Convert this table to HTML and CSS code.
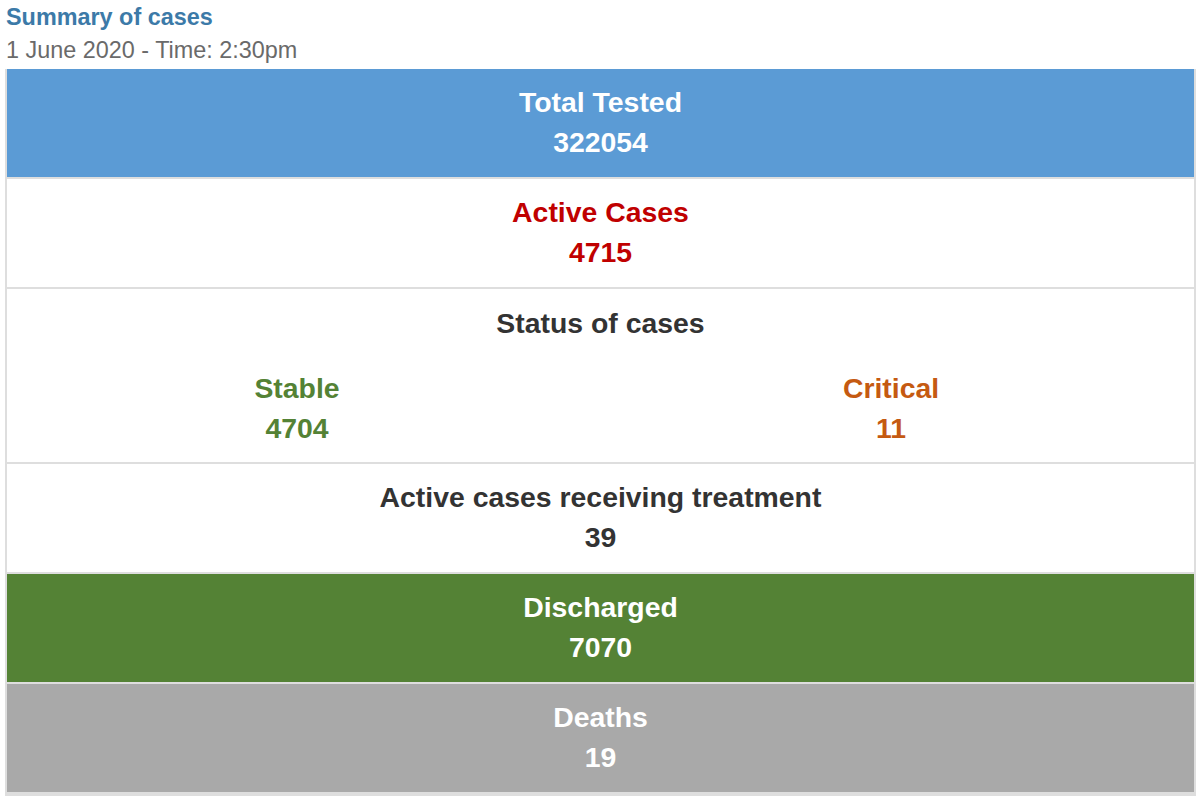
FILE: index.html
```html
<!DOCTYPE html>
<html lang="en">
<head>
<meta charset="utf-8">
<title>Summary of cases</title>
<link rel="stylesheet" href="styles.css">
</head>
<body>
<header class="head">
  <h1 class="title">Summary of cases</h1>
  <p class="date">1 June 2020 - Time: 2:30pm</p>
</header>
<section class="summary">
  <div class="row row-blue">
    <div class="label">Total Tested</div>
    <div class="value">322054</div>
  </div>
  <div class="row row-red">
    <div class="label">Active Cases</div>
    <div class="value">4715</div>
  </div>
  <div class="row row-status">
    <div class="label status-title">Status of cases</div>
    <div class="split">
      <div class="col col-stable">
        <div class="label">Stable</div>
        <div class="value">4704</div>
      </div>
      <div class="col col-critical">
        <div class="label">Critical</div>
        <div class="value">11</div>
      </div>
    </div>
  </div>
  <div class="row row-dark">
    <div class="label">Active cases receiving treatment</div>
    <div class="value">39</div>
  </div>
  <div class="row row-green">
    <div class="label">Discharged</div>
    <div class="value">7070</div>
  </div>
  <div class="row row-grey">
    <div class="label">Deaths</div>
    <div class="value">19</div>
  </div>
</section>
</body>
</html>
```
FILE: styles.css
```css
html, body {
  background: #ffffff;
}
body {
  margin: 0 4px 0 5px;
  font-family: "Liberation Sans", Arial, sans-serif;
}
.head {
  padding-left: 1px;
  margin-bottom: 4px;
}
.title {
  margin: 2px 0 0 0;
  font-size: 23.4px;
  line-height: 30px;
  font-weight: bold;
  color: #3c7aa8;
}
.date {
  margin: 3px 0 0 0;
  font-size: 23.4px;
  line-height: 30px;
  color: #6a6a6a;
}
.summary {
  border: 2px solid #dedede;
  border-top: 0;
  display: flex;
  flex-direction: column;
}
.row {
  padding: 13px 0 15px;
  text-align: center;
  font-size: 28.4px;
  line-height: 40px;
  font-weight: bold;
  border-bottom: 2px solid #dedede;
}
.row-blue {
  background: #5b9bd5;
  color: #ffffff;
}
.row-red {
  background: #ffffff;
  color: #c00000;
}
.row-dark {
  background: #ffffff;
  color: #333333;
}
.row-status {
  background: #ffffff;
  color: #333333;
  padding: 14px 0 14px;
}
.status-title {
  margin-bottom: 25px;
}
.split {
  display: grid;
  grid-template-columns: 1fr 1fr;
  column-gap: 14px;
  padding-right: 13px;
}
.col-stable {
  color: #548235;
}
.col-critical {
  color: #c55a11;
}
.row-green {
  background: #548235;
  color: #ffffff;
}
.row-grey {
  background: #a9a9a9;
  color: #ffffff;
}
```
